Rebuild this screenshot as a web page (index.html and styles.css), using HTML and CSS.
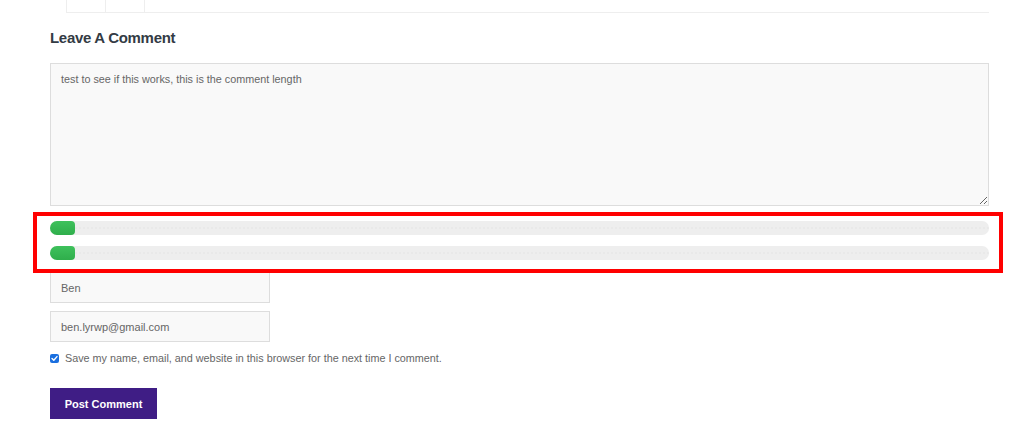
FILE: index.html
```html
<!DOCTYPE html>
<html lang="en">
<head>
<meta charset="utf-8">
<title>Leave A Comment</title>
<link rel="stylesheet" href="styles.css">
</head>
<body>
<div class="page">
  <div class="strip">
    <div class="cell"></div>
    <div class="cell"></div>
    <div class="cell last"></div>
  </div>
  <h3 class="title">Leave A Comment</h3>
  <form class="form">
    <textarea class="comment">test to see if this works, this is the comment length</textarea>
    <div class="bars">
      <div class="bar"><div class="fill" style="width:25px"></div></div>
      <div class="bar"><div class="fill" style="width:25px"></div></div>
    </div>
    <input class="field" type="text" value="Ben">
    <input class="field" type="text" value="ben.lyrwp@gmail.com">
    <label class="consent">
      <span class="check"><svg viewBox="0 0 9 9" width="9" height="9"><path d="M2 4.6 L3.8 6.3 L7 2.6" fill="none" stroke="#fff" stroke-width="1.4" stroke-linecap="round" stroke-linejoin="round"/></svg></span>
      <span class="consent-text">Save my name, email, and website in this browser for the next time I comment.</span>
    </label>
    <button class="submit" type="button">Post Comment</button>
  </form>
</div>
</body>
</html>
```

FILE: styles.css
```css
* { box-sizing: border-box; }
html, body { margin: 0; padding: 0; background: #fff; }
body { font-family: "Liberation Sans", Arial, sans-serif; }

.page {
  width: 1024px;
  height: 429px;
  padding: 0 35px 0 50px;
  overflow: hidden;
}

.strip {
  display: flex;
  margin-left: 16px;
  height: 13px;
  border-bottom: 1px solid #eeeeee;
}
.cell {
  width: 39px;
  border-left: 1px solid #eeeeee;
}
.cell.last { width: auto; }

.title {
  margin: 15px 0 0;
  font-size: 15px;
  line-height: 20px;
  letter-spacing: -0.3px;
  font-weight: bold;
  color: #333b44;
}

.form {
  display: flex;
  flex-direction: column;
  align-items: flex-start;
  margin-top: 15px;
}

.comment {
  display: block;
  width: 939px;
  height: 143px;
  margin: 0;
  padding: 8px 10px;
  border: 1px solid #dddddd;
  background: #f9f9f9;
  font-family: "Liberation Sans", Arial, sans-serif;
  font-size: 10.8px;
  line-height: 14px;
  color: #666666;
  resize: vertical;
}

.bars {
  position: relative;
  width: 939px;
  margin-top: 15px;
  display: flex;
  flex-direction: column;
  gap: 11px;
}
.bars::after {
  content: "";
  position: absolute;
  left: -17px;
  right: -14px;
  top: -9px;
  bottom: -13px;
  border: 4px solid #ff0000;
  pointer-events: none;
}
.bar {
  height: 14px;
  border-radius: 7px;
  background-color: #eeeeee;
  background-image: radial-gradient(circle, #e2e2e2 0.6px, transparent 0.8px);
  background-size: 4px 14px;
  background-position: 0 0;
}
.fill {
  height: 14px;
  border-radius: 7px 4px 4px 7px;
  background: linear-gradient(#3ec15c, #2fae4b);
}

.field {
  display: block;
  width: 220px;
  height: 31px;
  margin: 12px 0 0;
  padding: 0 10px;
  border: 1px solid #dddddd;
  background: #f9f9f9;
  font-family: "Liberation Sans", Arial, sans-serif;
  font-size: 11px;
  color: #666666;
}
.field + .field { margin-top: 8px; }

.consent {
  display: flex;
  align-items: center;
  gap: 6px;
  margin-top: 10px;
  height: 12px;
}
.check {
  width: 9px;
  height: 9px;
  border-radius: 2px;
  background: #1a6fdf;
  display: flex;
}
.consent-text {
  font-size: 10.8px;
  line-height: 12px;
  color: #666666;
}

.submit {
  margin-top: 24px;
  width: 107px;
  height: 31px;
  padding: 0;
  border: 0;
  background: #3f1d85;
  color: #ffffff;
  font-family: "Liberation Sans", Arial, sans-serif;
  font-size: 11px;
  font-weight: bold;
}
```
